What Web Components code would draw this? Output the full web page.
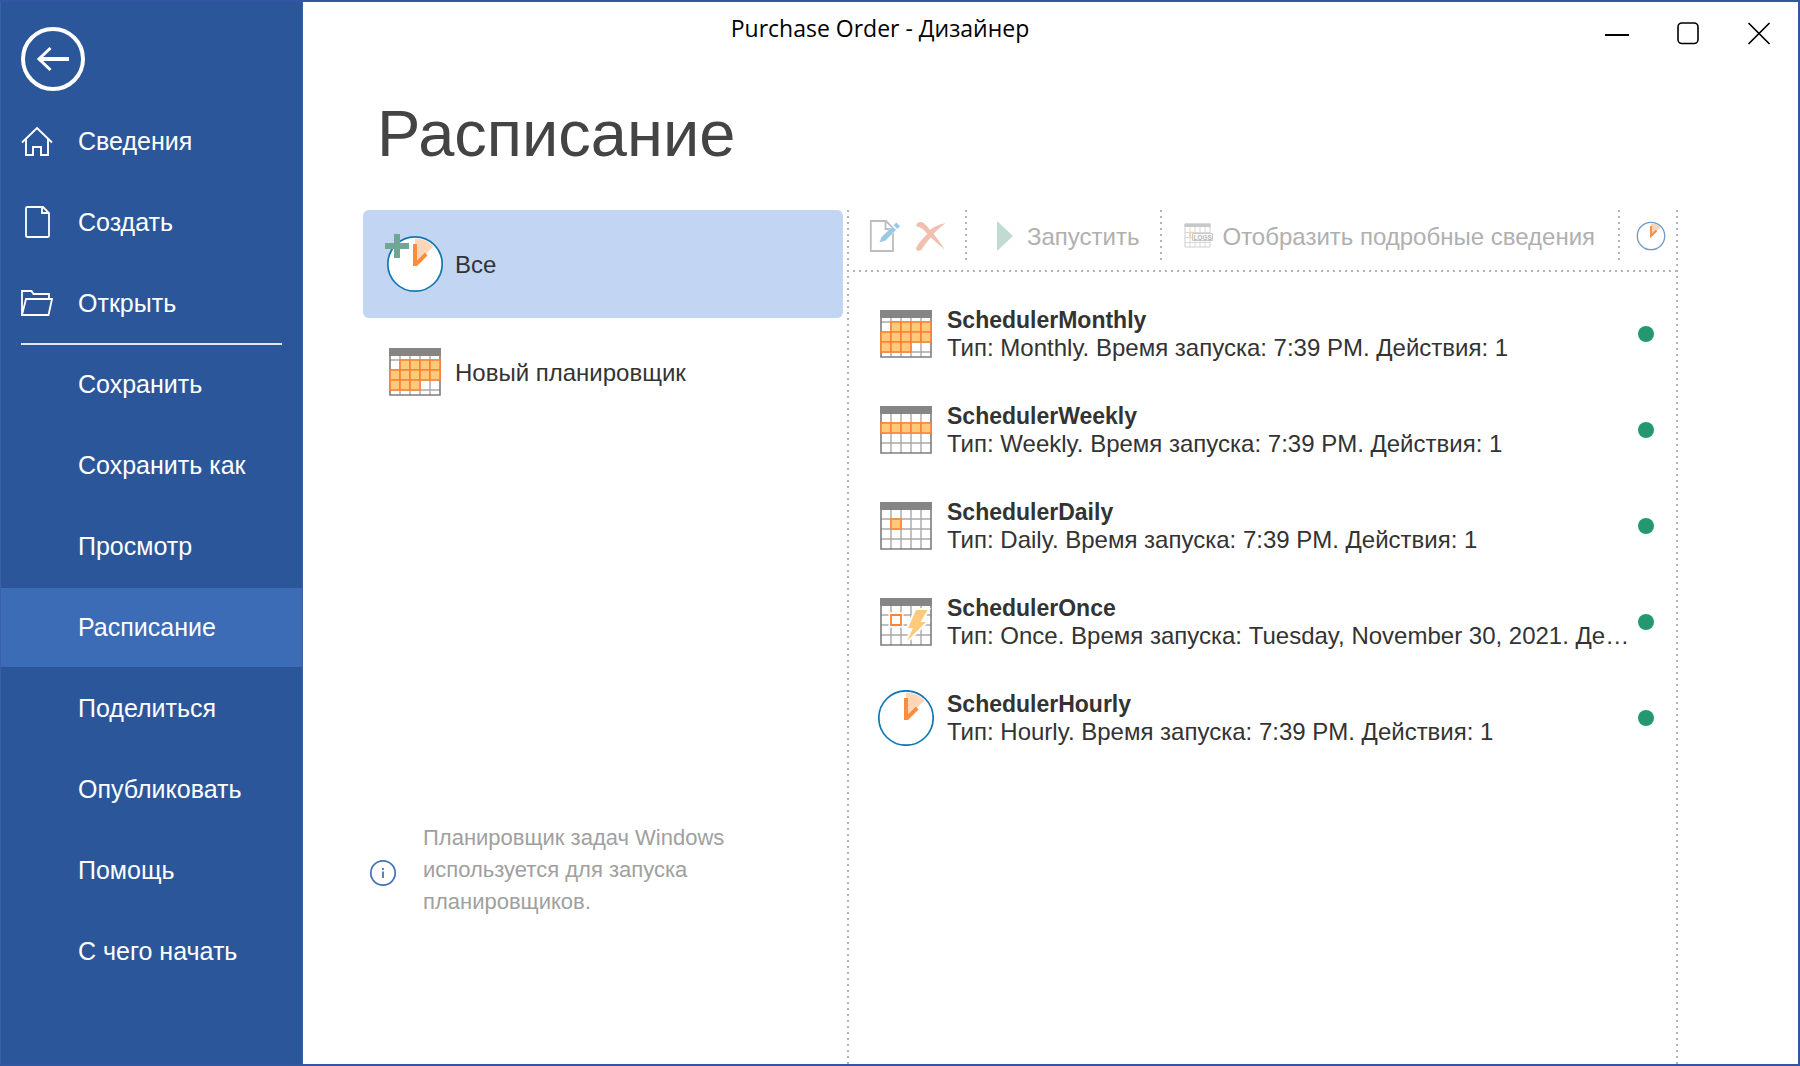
<!DOCTYPE html>
<html lang="ru">
<head>
<meta charset="utf-8">
<title>Purchase Order - Дизайнер</title>
<style>
  html, body { height: 100%; }
  body { margin: 0; font-family: "Liberation Sans", Arial, sans-serif; font-size: 24px; color: #333; background: #fff; }
</style>
</head>
<body>
<designer-window>
  <side-menu slot="menu">
    <menu-item icon="home">Сведения</menu-item>
    <menu-item icon="page">Создать</menu-item>
    <menu-item icon="folder">Открыть</menu-item>
    <menu-divider></menu-divider>
    <menu-item>Сохранить</menu-item>
    <menu-item>Сохранить как</menu-item>
    <menu-item>Просмотр</menu-item>
    <menu-item selected>Расписание</menu-item>
    <menu-item>Поделиться</menu-item>
    <menu-item>Опубликовать</menu-item>
    <menu-item>Помощь</menu-item>
    <menu-item>С чего начать</menu-item>
  </side-menu>
  <title-bar slot="title">Purchase Order - Дизайнер</title-bar>
  <schedule-page>
    <span slot="heading">Расписание</span>
    <filter-item slot="filter" icon="clock-plus" selected>Все</filter-item>
    <filter-item slot="filter" icon="monthly">Новый планировщик</filter-item>
    <info-note slot="filter">Планировщик задач Windows используется для запуска планировщиков.</info-note>
    <tool-bar slot="tools"></tool-bar>
    <schedule-row icon="monthly" name="SchedulerMonthly">Тип: Monthly. Время запуска: 7:39 PM. Действия: 1</schedule-row>
    <schedule-row icon="weekly" name="SchedulerWeekly">Тип: Weekly. Время запуска: 7:39 PM. Действия: 1</schedule-row>
    <schedule-row icon="daily" name="SchedulerDaily">Тип: Daily. Время запуска: 7:39 PM. Действия: 1</schedule-row>
    <schedule-row icon="once" name="SchedulerOnce">Тип: Once. Время запуска: Tuesday, November 30, 2021. Действия: 1</schedule-row>
    <schedule-row icon="clock" name="SchedulerHourly">Тип: Hourly. Время запуска: 7:39 PM. Действия: 1</schedule-row>
  </schedule-page>
</designer-window>

<script>
const svg = (w, h, body) =>
  `<svg width="${w}" height="${h}" viewBox="0 0 ${w} ${h}" fill="none" aria-hidden="true">${body}</svg>`;

// Calendar sheet: 5 columns, a header strip and one horizontal rule per entry of `rows`.
const COLS = [1, 11, 21, 31, 41, 51];
function calendar(rows, cells) {
  let s = '<path d="M1 1H51V47H1Z" fill="#fff"/>';
  s += `<path d="${COLS.slice(1, 5).map(x => `M${x} 8V47`).join('')}${rows.map(y => `M1 ${y}H51`).join('')}" stroke="#a9a9a9" stroke-width="1.4"/>`;
  s += '<path d="M1 1H51V47H1Z" stroke="#7d7d7d" stroke-width="1.6"/><path d="M0 0H52V8H0Z" fill="#858585"/>';
  for (const [c, y1, y2] of cells)
    s += `<path d="M${COLS[c]} ${y1}H${COLS[c + 1]}V${y2}H${COLS[c]}Z" fill="#fcca7a" stroke="#ff8232" stroke-width="1.6"/>`;
  return s;
}
const clockFace =
  '<circle cx="28" cy="28" r="27.2" fill="#fff" stroke="#1278b5" stroke-width="1.7"/>' +
  '<path d="M28 28V2.500A25.500 25.500 0 0 1 46.500 10.500Z" fill="#ffd6b8"/>' +
  '<path d="M26 8H30V24.500L38 16.500 40.500 19.500 30 30H26Z" fill="#ff8c3c"/>';

const ICONS = {
  back: svg(64, 64, '<circle cx="32" cy="32" r="30" stroke="#fff" stroke-width="4"/><path d="M18 32H48" stroke="#fff" stroke-width="4"/><path d="M29.500 21 18 32 29.500 43" stroke="#fff" stroke-width="3"/>'),
  home: svg(32, 32, '<path d="M1 17.500 16 3 31 17.500M5 14V30H12V22H20V30H27V14" stroke="#fff" stroke-width="1.9"/>'),
  page: svg(32, 34, '<path d="M6.500 2H22L28 8V31Q28 32 26.500 32H6.500Q5 32 5 31V3Q5 2 6.500 2ZM21 2V8H28" stroke="#fff" stroke-width="1.8"/>'),
  folder: svg(32, 28, '<path d="M1 26V2H10.500L12.500 5H28V9.500M1 26 5 10H31L27.500 26Z" stroke="#fff" stroke-width="1.8"/>'),
  clock: svg(56, 56, clockFace),
  'clock-plus': svg(60, 60, `<g transform="translate(3 3)">${clockFace}</g><path d="M10 1H16V10H25V16H16V25H10V16H1V10H10Z" fill="#70a694"/>`),
  monthly: svg(52, 48, calendar([12, 22, 32, 42],
    [[1,12,22],[2,12,22],[3,12,22],[4,12,22],[0,22,32],[1,22,32],[2,22,32],[3,22,32],[4,22,32],[0,32,42],[1,32,42],[2,32,42]])),
  weekly: svg(52, 48, calendar([17, 27, 37], [0, 1, 2, 3, 4].map(c => [c, 17, 27]))),
  daily: svg(52, 48, calendar([17, 27, 37], [[1, 17, 27]])),
  once: svg(52, 48, calendar([17, 27, 37], []) +
    '<path d="M8.500 14.500H23.500V29.500H8.500Z" fill="#fff"/><path d="M11 17H21V27H11Z" stroke="#ff8232" stroke-width="1.8"/>' +
    '<path d="M36 12H47.500L40.500 24H46L27 43 33 30H28Z" fill="#fcca7a" stroke="#fff" stroke-width="4" paint-order="stroke"/>'),
  edit: svg(32, 32, '<path d="M1.800 1H17L24 8V31H1.800Z" fill="#fff" stroke="#bdbdbd" stroke-width="1.8"/><path d="M16.500 1V9H24" stroke="#bdbdbd" stroke-width="1.8"/><path d="M10.500 22.500 12.500 17 23.500 6.500 27 10 16.500 20.500Z" fill="#99c9e4" stroke="#fff" stroke-width="1" paint-order="stroke"/><path d="M24.700 5.200 27.300 2.500 31 6.200 28.300 8.900Z" fill="#99c9e4"/>'),
  remove: svg(32, 32, '<path d="M1.500 4C5 0 9 1.500 15 10 20 6 25 4 30.500 3 26 6.500 21.500 10.500 18.500 14 22.500 19 26.500 24 29.500 29.500 25 25.500 20 21.500 16 17.500 12 21.500 8.500 26 6.500 30 4 31.500 1 31 1 28 4 22.500 8 18 12.500 14 9 9.500 5 6.500 1.500 6.500Z" fill="#f1bfb0"/>'),
  run: svg(16, 32, '<path d="M0 1 16 16 0 31Z" fill="#c1dbd2"/>'),
  logs: svg(30, 26, '<path d="M1 1H26V24H1Z" stroke="#cfcfcf"/><path d="M6 4V24M11 4V24M16 4V24M21 4V24M1 9.500H26M1 14.500H26M1 19.500H26" stroke="#d8d8d8"/><path d="M.5 .5H26.500V4H.5Z" fill="#c8c8c8"/><path d="M6 14V9.500H11" stroke="#fdcda5" stroke-width="1.500"/><path d="M8.500 10.500H28.500V17.500H8.500Z" fill="#fff" stroke="#c8c8c8"/><text x="9.500" y="16.500" font-family="Liberation Sans, sans-serif" font-size="6.500" font-weight="700" fill="#b4b4b4">LOGS</text>'),
  history: svg(30, 30, '<circle cx="15" cy="15" r="13.700" fill="#fff" stroke="#6f9bcb" stroke-width="1.300"/><path d="M15 15V2.500A12.500 12.500 0 0 1 24.500 6.500Z" fill="#fdd3b5"/><path d="M15 5V15L20.500 9.500" stroke="#f08c45" stroke-width="1.800"/>'),
  info: svg(28, 28, '<circle cx="14" cy="14" r="12.200" stroke="#4472b0" stroke-width="1.700"/><path d="M14 12.500V19M14 9V11" stroke="#2b579a" stroke-width="1.500"/>'),
  minimize: svg(24, 24, '<path d="M0 13H24" stroke="#000" stroke-width="2"/>'),
  maximize: svg(24, 24, '<rect x="2" y="1" width="20" height="20.500" rx="4" stroke="#000" stroke-width="1.600"/>'),
  close: svg(24, 24, '<path d="M1.500 1 22.500 22M22.500 1 1.500 22" stroke="#000" stroke-width="1.700"/>')
};

const RESET = `
  *, *::before { box-sizing: border-box; }
  button { font: inherit; color: inherit; background: none; border: 0; margin: 0; padding: 0; text-align: left; cursor: pointer; }
  svg { display: block; flex: none; }
`;

function define(tag, render) {
  customElements.define(tag, class extends HTMLElement {
    constructor() {
      super();
      this.attachShadow({ mode: 'open' });
    }
    connectedCallback() {
      const t = document.createElement('template');
      t.innerHTML = `<style>${RESET}</style>` + render(this);
      this.shadowRoot.replaceChildren(t.content.cloneNode(true));
    }
  });
}

define('ui-icon', el => `
  <style>:host { display: block; flex: none; }</style>${ICONS[el.getAttribute('name')] || ''}`);

define('designer-window', () => `
  <style>
    :host { display: grid; grid-template-columns: 303px minmax(0, 1fr); grid-template-rows: auto minmax(0, 1fr);
            box-sizing: border-box; min-height: 100vh; border: 2px solid #3257a2; border-left-width: 0; }
    .menu { grid-row: 1 / 3; display: grid; }
    .page { display: grid; grid-template-columns: minmax(0, 1fr); }
  </style>
  <div class="menu"><slot name="menu"></slot></div>
  <slot name="title"></slot>
  <main class="page"><slot></slot></main>`);

define('side-menu', () => `
  <style>
    :host { display: block; background: #2b579a; color: #fff; font-size: 25px; border: solid #3a60a8; border-width: 0 1px; }
    button { display: block; margin: 25px 0 11px 20px; }
    nav { display: flex; flex-direction: column; }
  </style>
  <button type="button" aria-label="Назад"><ui-icon name="back"></ui-icon></button>
  <nav><slot></slot></nav>`);

define('menu-item', el => `
  <style>
    :host { display: block; margin-bottom: 2px; }
    :host([selected]) { background: #3c6cb6; }
    button { display: flex; align-items: center; width: 100%; height: 79px; padding: 0 0 2px 20px; line-height: 28px; }
    .icon { width: 57px; }
  </style>
  <button type="button"><span class="icon">${el.hasAttribute('icon') ? `<ui-icon name="${el.getAttribute('icon')}"></ui-icon>` : ''}</span><slot></slot></button>`);

define('menu-divider', () => `
  <style>:host { display: block; height: 2px; margin: -2px 20px 0; background: #dfe6f1; }</style>`);

define('title-bar', () => `
  <style>
    :host { display: flex; padding-right: 4px; height: 64px; color: #000; }
    h2 { flex: 1; margin: 0; padding: 10px 124px 0 0; text-align: center; font: 400 23px/32px "Open Sans", sans-serif; }
    button { display: grid; place-items: center; width: 71px; height: 64px; }
  </style>
  <h2><slot></slot></h2>
  <button type="button" aria-label="Свернуть"><ui-icon name="minimize"></ui-icon></button>
  <button type="button" aria-label="Развернуть"><ui-icon name="maximize"></ui-icon></button>
  <button type="button" aria-label="Закрыть"><ui-icon name="close"></ui-icon></button>`);

define('schedule-page', () => `
  <style>
    :host { display: flex; flex-direction: column; padding: 0 120px 0 60px; }
    h1 { margin: 32px 0 40px 14px; font-size: 65px; line-height: 72px; font-weight: 400; color: #444; }
    .columns { flex: 1; display: flex; gap: 4px; }
    .filters { width: 480px; display: flex; flex-direction: column; }
    .list { flex: 1; min-width: 0; padding: 0 2px; --dot: #b4b4b4;
            background:
              repeating-linear-gradient(var(--dot) 0 2px, transparent 2px 6px) left / 2px 100% no-repeat,
              repeating-linear-gradient(var(--dot) 0 2px, transparent 2px 6px) right / 2px 100% no-repeat; }
    .rows { padding: 14px 22px 0 29px; }
  </style>
  <h1><slot name="heading"></slot></h1>
  <div class="columns">
    <section class="filters"><slot name="filter"></slot></section>
    <section class="list">
      <slot name="tools"></slot>
      <div class="rows"><slot></slot></div>
    </section>
  </div>`);

define('filter-item', el => `
  <style>
    :host { display: block; border-radius: 6px; }
    :host([selected]) { background: #c2d5f2; }
    button { display: flex; align-items: center; width: 100%; height: 108px; padding-left: 20px; line-height: 30px; }
    .icon { width: 72px; display: flex; justify-content: center; padding-right: 8px; }
    :host([selected]) .icon { padding: 0 11px 2px 0; }
    .label { padding-top: 2px; }
  </style>
  <button type="button"><span class="icon"><ui-icon name="${el.getAttribute('icon')}"></ui-icon></span><span class="label"><slot></slot></span></button>`);

define('info-note', () => `
  <style>
    :host { display: flex; align-items: center; gap: 26px; margin-top: auto; padding: 0 80px 146px 6px;
            font-size: 22px; line-height: 32px; color: #a0a0a0; }
    ui-icon { padding-top: 6px; }
    p { margin: 0; }
  </style>
  <ui-icon name="info"></ui-icon><p><slot></slot></p>`);

define('tool-bar', () => `
  <style>
    :host { display: flex; height: 62px; color: #b0b0b0; line-height: 30px;
            background: repeating-linear-gradient(90deg, transparent 0 4px, var(--dot) 4px 6px) bottom / 100% 2px no-repeat; }
    .group { display: flex; align-items: center; height: 52px; }
    .group + .group { background: repeating-linear-gradient(var(--dot) 0 2px, transparent 2px 6px) left / 2px 100% no-repeat; }
    button { display: flex; align-items: center; gap: 14px; }
    span { padding-top: 2px; }
    .first { gap: 14px; padding: 0 18px 0 20px; }
    .run { padding: 0 21px 0 32px; }
    .logs { flex: 1; padding-left: 24px; }
    .logs button { gap: 8px; }
    .last { padding: 0 10px 0 18px; }
  </style>
  <div class="group first">
    <button type="button" aria-label="Изменить"><ui-icon name="edit"></ui-icon></button>
    <button type="button" aria-label="Удалить"><ui-icon name="remove"></ui-icon></button>
  </div>
  <div class="group run"><button type="button"><ui-icon name="run"></ui-icon><span>Запустить</span></button></div>
  <div class="group logs"><button type="button"><ui-icon name="logs"></ui-icon><span>Отобразить подробные сведения</span></button></div>
  <div class="group last"><button type="button" aria-label="История"><ui-icon name="history"></ui-icon></button></div>`);

define('schedule-row', el => `
  <style>
    :host { display: flex; align-items: center; height: 96px; }
    .icon { width: 56px; display: flex; justify-content: center; margin-right: 13px; }
    .text { flex: 1; min-width: 0; line-height: 27px; }
    h3, p { margin: 0; overflow: hidden; text-overflow: ellipsis; white-space: nowrap; }
    h3 { font-size: 23px; }
    .state { flex: none; width: 16px; height: 16px; margin-left: 8px; border-radius: 50%; background: #24996f; }
  </style>
  <span class="icon"><ui-icon name="${el.getAttribute('icon')}"></ui-icon></span>
  <div class="text"><h3>${el.getAttribute('name')}</h3><p><slot></slot></p></div>
  <span class="state"></span>`);
</script>
</body>
</html>
